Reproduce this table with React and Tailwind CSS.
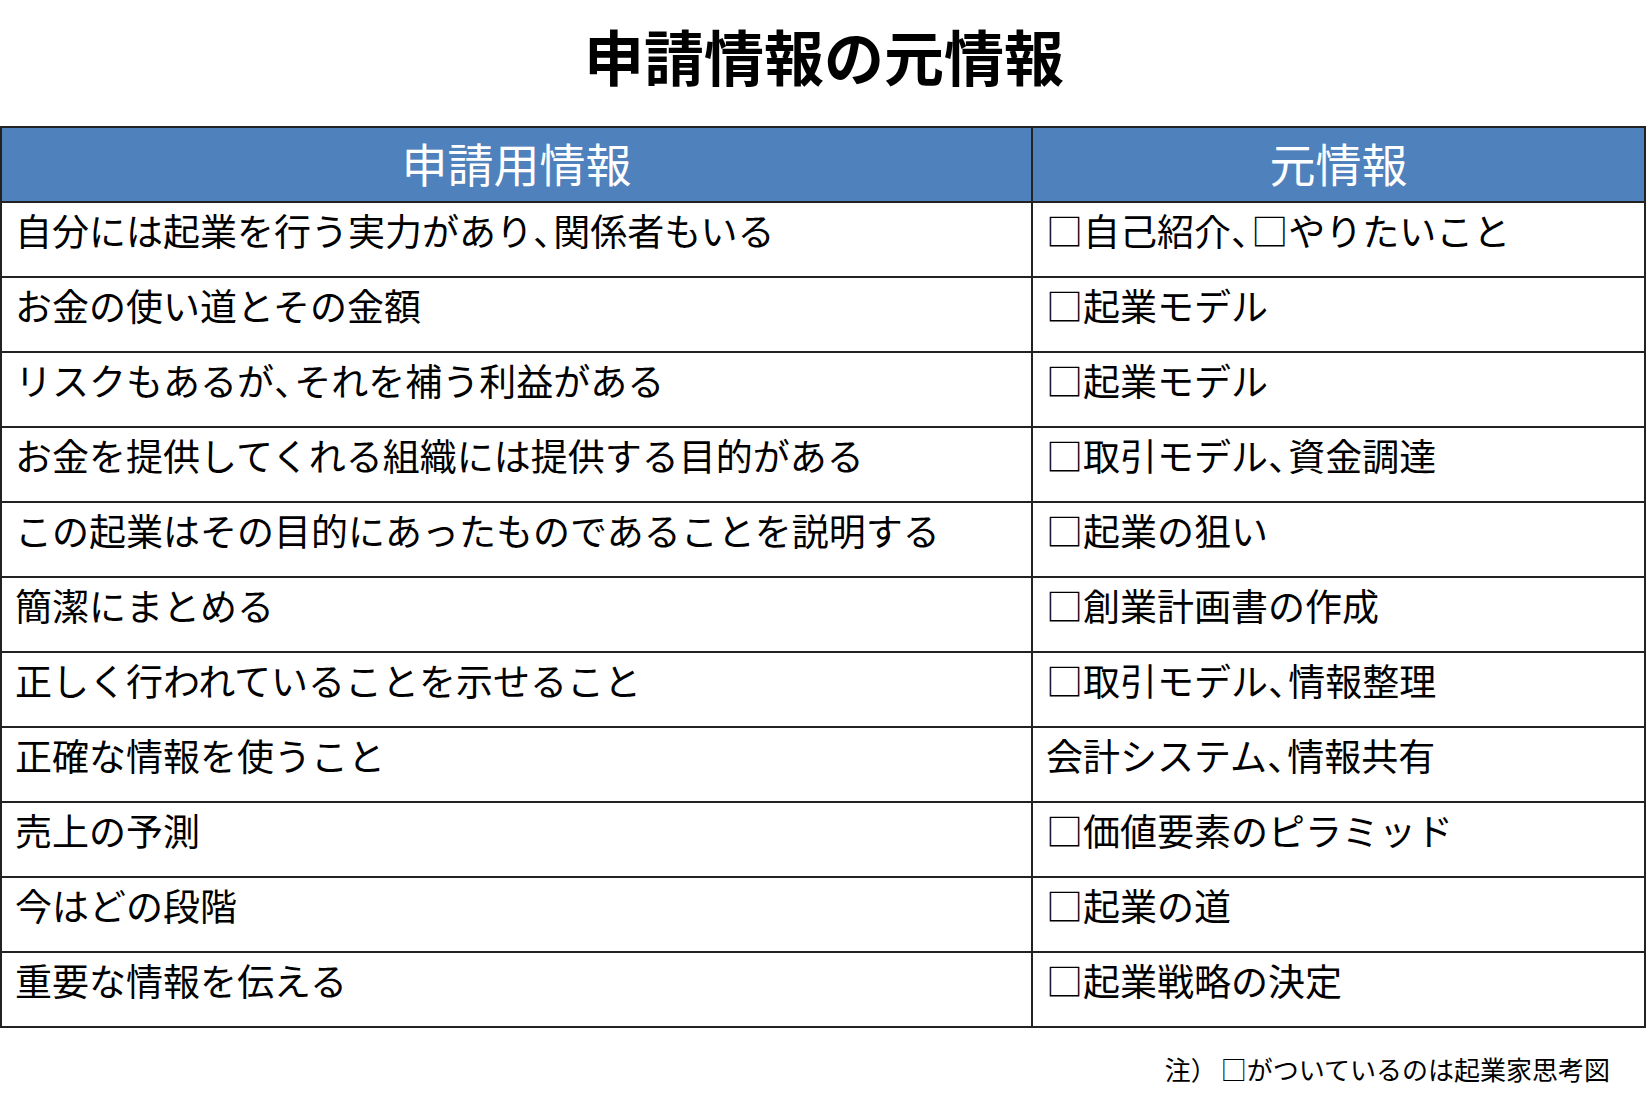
import React from "react";

const rows = [
  ["自分には起業を行う実力があり、関係者もいる", "□自己紹介、□やりたいこと"],
  ["お金の使い道とその金額", "□起業モデル"],
  ["リスクもあるが、それを補う利益がある", "□起業モデル"],
  ["お金を提供してくれる組織には提供する目的がある", "□取引モデル、資金調達"],
  ["この起業はその目的にあったものであることを説明する", "□起業の狙い"],
  ["簡潔にまとめる", "□創業計画書の作成"],
  ["正しく行われていることを示せること", "□取引モデル、情報整理"],
  ["正確な情報を使うこと", "会計システム、情報共有"],
  ["売上の予測", "□価値要素のピラミッド"],
  ["今はどの段階", "□起業の道"],
  ["重要な情報を伝える", "□起業戦略の決定"],
];

const font = {
  fontFamily: '"Noto Sans CJK JP", "Noto Sans", sans-serif',
};

// the source font sets 、 half width
const Cell = ({ text }) => {
  const parts = text.split("、");
  return parts.map((p, i) => (
    <React.Fragment key={i}>
      {p}
      {i < parts.length - 1 && <span className="tracking-[-0.45em]">、</span>}
    </React.Fragment>
  ));
};

const App = () => {
  return (
    <div className="w-[1648px] h-[1102px] bg-white text-black" style={font}>
      <h1 className="pt-[25px] text-center text-[60px] font-bold leading-none">
        申請情報の元情報
      </h1>

      <div className="mt-[41px] w-[1646px] border-t-2 border-l-2 border-[#222]">
        <div className="grid grid-cols-[1031px_1fr] bg-[#4f81bd] text-white">
          <div className="h-[75px] pb-[6px] flex items-center justify-center border-r-2 border-b-2 border-[#222] text-[46px] leading-none">
            申請用情報
          </div>
          <div className="h-[75px] pb-[6px] flex items-center justify-center border-r-2 border-b-2 border-[#222] text-[46px] leading-none">
            元情報
          </div>
        </div>

        {rows.map(([left, right], i) => (
          <div key={i} className="grid grid-cols-[1031px_1fr]">
            <div className="h-[75px] pl-[13px] pt-[9px] border-r-2 border-b-2 border-[#222] text-[37px] leading-none whitespace-nowrap">
              <Cell text={left} />
            </div>
            <div className="h-[75px] pl-[13px] pt-[9px] border-r-2 border-b-2 border-[#222] text-[37px] leading-none whitespace-nowrap">
              <Cell text={right} />
            </div>
          </div>
        ))}
      </div>

      <p className="mt-[28px] pr-[38px] text-right text-[26px] leading-none">
        注）<span className="ml-[4px]">□がついているのは起業家思考図</span>
      </p>
    </div>
  );
};

export default App;
